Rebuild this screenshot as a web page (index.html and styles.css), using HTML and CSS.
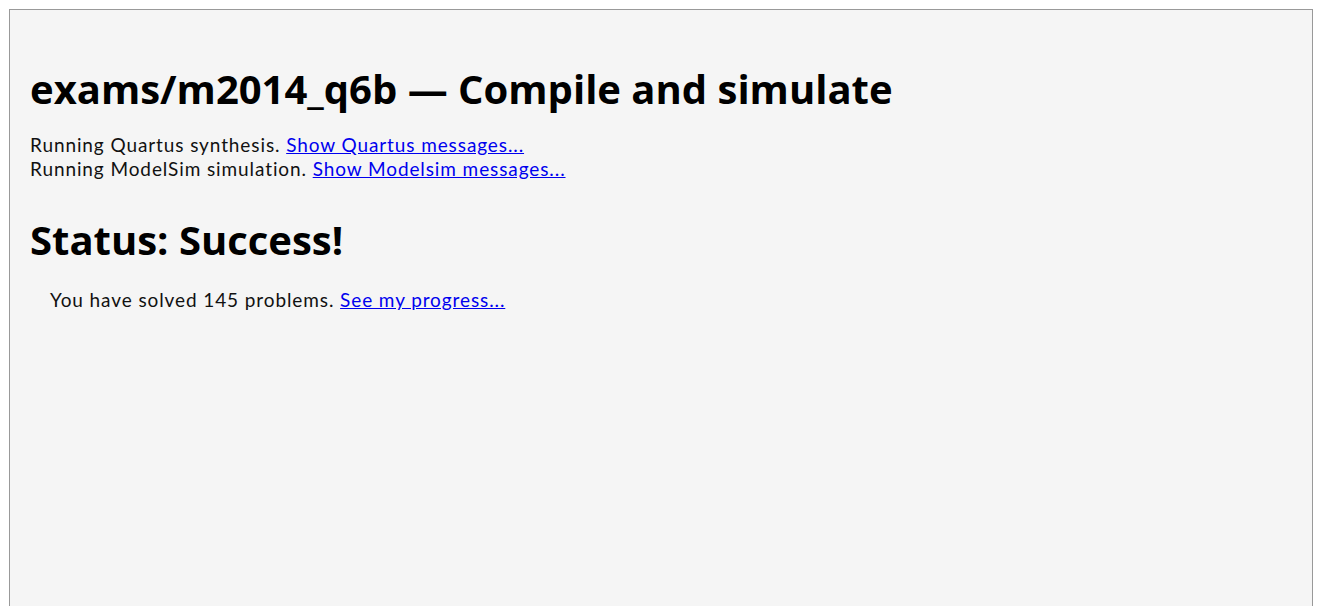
FILE: index.html
```html
<!DOCTYPE html>
<html>
<head>
<meta charset="utf-8">
<link rel="stylesheet" href="styles.css">
</head>
<body>
<div class="box">
  <h1 class="title">exams/m2014_q6b — Compile and simulate</h1>
  <p class="log">Running Quartus synthesis. <a href="#">Show Quartus messages...</a><br>
  Running ModelSim simulation. <a href="#">Show Modelsim messages...</a></p>
  <h2 class="status">Status: Success!</h2>
  <p class="solved">You have solved 145 problems. <a href="#">See my progress...</a></p>
</div>
</body>
</html>
```

FILE: styles.css
```css
html, body {
  margin: 0;
  padding: 0;
  background: #ffffff;
}
body {
  padding: 9px 10px 0 9px;
  font-family: "Lato", "Liberation Sans", sans-serif;
  font-size: 19px;
  letter-spacing: 0.9px;
  line-height: 24px;
  color: #111;
}
.box {
  background: #f5f5f5;
  border: 1px solid #999;
  padding: 40px 20px 320px 20px;
}
.title {
  font-family: "Open Sans", sans-serif;
  font-weight: 700;
  font-size: 40px;
  letter-spacing: 0;
  line-height: 48px;
  margin: 15px 0 20px 0;
  color: #000;
}
.log {
  margin: 0;
}
.status {
  font-family: "Open Sans", sans-serif;
  font-weight: 700;
  font-size: 40px;
  letter-spacing: 0;
  line-height: 48px;
  margin: 35px 0 24px 0;
  color: #000;
}
.solved {
  margin: 0 0 0 20px;
}
a {
  color: #0000ee;
}
```
